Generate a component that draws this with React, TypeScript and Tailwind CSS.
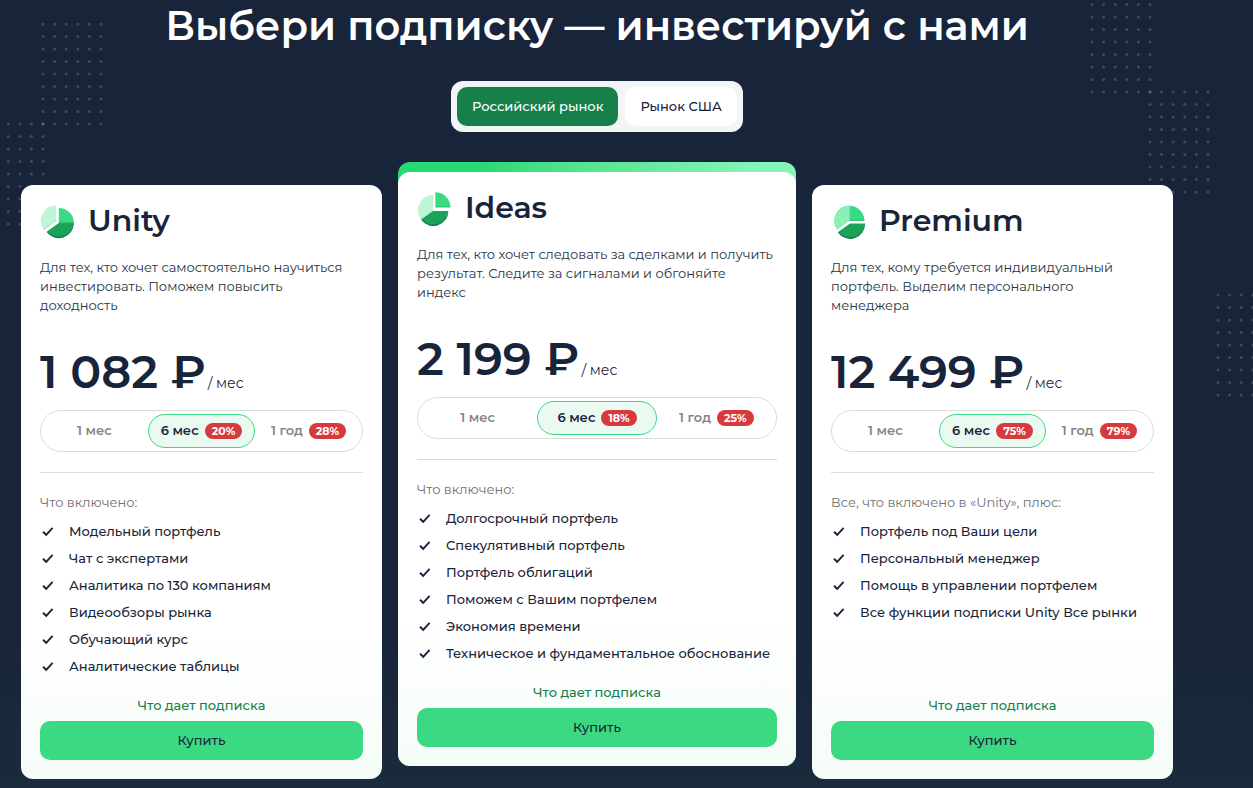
import { useState } from "react";
import clsx from "clsx";

type PieKind = "left" | "right" | "bottom";

interface Period {
  label: string;
  discount?: string;
}

interface Plan {
  name: string;
  pie: PieKind;
  description: string;
  price: string;
  periods: Period[];
  included: string;
  features: string[];
  featured?: boolean;
}

const plans: Plan[] = [
  {
    name: "Unity",
    pie: "left",
    description: "Для тех, кто хочет самостоятельно научиться\nинвестировать. Поможем повысить\nдоходность",
    price: "1 082 ₽",
    periods: [{ label: "1 мес" }, { label: "6 мес", discount: "20%" }, { label: "1 год", discount: "28%" }],
    included: "Что включено:",
    features: [
      "Модельный портфель",
      "Чат с экспертами",
      "Аналитика по 130 компаниям",
      "Видеообзоры рынка",
      "Обучающий курс",
      "Аналитические таблицы",
    ],
  },
  {
    name: "Ideas",
    pie: "right",
    description: "Для тех, кто хочет следовать за сделками и получить\nрезультат. Следите за сигналами и обгоняйте\nиндекс",
    price: "2 199 ₽",
    periods: [{ label: "1 мес" }, { label: "6 мес", discount: "18%" }, { label: "1 год", discount: "25%" }],
    included: "Что включено:",
    features: [
      "Долгосрочный портфель",
      "Спекулятивный портфель",
      "Портфель облигаций",
      "Поможем с Вашим портфелем",
      "Экономия времени",
      "Техническое и фундаментальное обоснование",
    ],
    featured: true,
  },
  {
    name: "Premium",
    pie: "bottom",
    description: "Для тех, кому требуется индивидуальный\nпортфель. Выделим персонального\nменеджера",
    price: "12 499 ₽",
    periods: [{ label: "1 мес" }, { label: "6 мес", discount: "75%" }, { label: "1 год", discount: "79%" }],
    included: "Все, что включено в «Unity», плюс:",
    features: [
      "Портфель под Ваши цели",
      "Персональный менеджер",
      "Помощь в управлении портфелем",
      "Все функции подписки Unity Все рынки",
    ],
  },
];

// centre of each slice: [left, right, bottom]; one of them is pulled out
const pies: Record<PieKind, { centers: [number, number][]; light: string }> = {
  left: { centers: [[16.2, 16.9], [18.8, 18.9], [18.8, 19.2]], light: "#bdf5d5" },
  right: { centers: [[16.3, 19.3], [18.4, 16.3], [16.3, 20]], light: "#bdf5d5" },
  bottom: { centers: [[18.4, 16.8], [18.4, 16.8], [19, 19.8]], light: "#8bf0b5" },
};

function PieIcon({ kind }: { kind: PieKind }) {
  const { centers, light } = pies[kind];
  const [left, right, bottom] = centers.map(([x, y]) => `translate(${x} ${y})`);

  return (
    <svg viewBox="0 -1 34 36" className="h-9 w-[34px] shrink-0" aria-hidden="true">
      <g transform={left}>
        <path d="M0 0V-15.3A15.3 15.3 0 0 0-12.4 9Z" fill={light} />
        <path d="M0-0.8V0L-12.4 9L-12.9 8.2Z" fill="#9debbf" />
      </g>
      <g transform={right}>
        <path d="M0 0V-15A15 15 0 0 1 15 0Z" fill="#3bd981" />
        <path d="M0-1H15V0H0Z" fill="#25c76d" />
      </g>
      <g transform={bottom}>
        <path d="M0 0H15A15 15 0 0 1-12.2 8.8Z" fill="#11804a" />
        <path d="M0 0H15A15 14 0 0 1-11.6 8.2Z" fill="#1ca35a" />
      </g>
    </svg>
  );
}

function CheckIcon() {
  return (
    <svg viewBox="0 0 12 10" className="h-[10px] w-3 shrink-0" fill="none" aria-hidden="true">
      <path d="M1 4.7L4.2 7.8L10.6 0.8" stroke="#18243a" strokeWidth="1.9" />
    </svg>
  );
}

function Dots({ className }: { className: string }) {
  return (
    <svg viewBox="0 0 62 104" className={clsx("absolute h-[104px] w-[62px]", className)} aria-hidden="true">
      {Array.from({ length: 54 }, (_, i) => (
        <circle key={i} cx={2 + (i % 6) * 11.6} cy={2 + Math.floor(i / 6) * 12.5} r="1.6" fill="#fff" fillOpacity="0.17" />
      ))}
    </svg>
  );
}

function PlanCard({ plan }: { plan: Plan }) {
  const [period, setPeriod] = useState(1);

  return (
    <article
      className={clsx(
        "flex flex-col rounded-xl",
        plan.featured ? "mb-[13px] bg-linear-to-r from-[#26d975] from-20% to-[#85f4b8] to-90% pt-[10px]" : "mt-[23px]"
      )}
    >
      <div className="flex flex-1 flex-col rounded-xl bg-linear-to-b from-white from-75% to-[#f5fcf8] px-[19px] pt-[18px] pb-[19px]">
        <div className="flex items-center gap-3.5">
          <PieIcon kind={plan.pie} />
          <h2 className="text-[30px] leading-9 font-semibold">{plan.name}</h2>
        </div>
        <p className="mt-[19px] text-[13px] leading-[19px] whitespace-pre-line text-[#2a3342]">{plan.description}</p>
        <p className="mt-[34px] flex items-baseline gap-0.5">
          <span className="text-[46px] leading-[46px] font-semibold">{plan.price}</span>
          <span className="text-sm">/ мес</span>
        </p>

        <div
          role="radiogroup"
          aria-label="Период"
          className="mt-[15px] grid h-[42px] grid-cols-3 items-center rounded-full border border-[#dcdcdc]"
        >
          {plan.periods.map((p, i) => (
            <label
              key={p.label}
              className={clsx(
                "relative flex h-[34px] cursor-pointer items-center justify-center gap-1.5 rounded-full border text-[13px] font-semibold",
                i === period ? "border-[#3bd981] bg-[#eafaf1]" : "border-transparent text-[#858585]"
              )}
            >
              <input
                type="radio"
                name={plan.name}
                checked={i === period}
                onChange={() => setPeriod(i)}
                className="absolute inset-0 cursor-pointer appearance-none rounded-full"
              />
              {p.label}
              {p.discount && (
                <span className="rounded-full bg-[#d63a3d] px-[7px] text-[11px] leading-4 font-bold text-white">
                  {p.discount}
                </span>
              )}
            </label>
          ))}
        </div>

        <hr className="mt-5 border-[#dcdcdc]" />
        <p className="mt-5 text-[13px] leading-[19px] text-[#707070]">{plan.included}</p>
        <ul className="mt-1.5 flex-1 text-[13px] leading-[27px] font-medium">
          {plan.features.map((f) => (
            <li key={f} className="flex items-center gap-[15px] pl-0.5">
              <CheckIcon />
              {f}
            </li>
          ))}
        </ul>
        <a href="#details" className="mt-4 self-center text-[13px] leading-[19px] font-medium text-[#17804a]">
          Что дает подписка
        </a>
        <button className="mt-1.5 h-[39px] cursor-pointer rounded-[10px] bg-[#3bd981] text-[13px] font-medium">
          Купить
        </button>
      </div>
    </article>
  );
}

export default function App() {
  const [market, setMarket] = useState(0);

  return (
    <main className="relative min-h-screen overflow-hidden bg-linear-to-b from-[#18243a] from-80% to-[#1a2b3c] pr-20 pl-[21px] font-['Montserrat','Inter',sans-serif] text-[#18243a]">
      <Dots className="top-[22px] left-[41px]" />
      <Dots className="top-[122px] -left-[17px]" />
      <Dots className="-top-[10px] right-[101px]" />
      <Dots className="top-[90px] right-[43px]" />
      <Dots className="top-[293px] -right-[25px]" />

      <div className="relative">
        <h1 className="text-center text-[40px] leading-[51px] font-semibold text-white">
          Выбери подписку — инвестируй с нами
        </h1>

        <div className="mx-auto mt-[30px] flex w-fit gap-[7px] rounded-xl bg-[#f3f4f6] p-1.5">
          {["Российский рынок", "Рынок США"].map((name, i) => (
            <button
              key={name}
              onClick={() => setMarket(i)}
              className={clsx(
                "h-[39px] cursor-pointer rounded-[10px] px-[15px] text-[13px] font-medium",
                i === market ? "bg-[#17804a] text-white" : "bg-white"
              )}
            >
              {name}
            </button>
          ))}
        </div>

        <div className="mt-[30px] grid grid-cols-[361fr_398fr_361fr] gap-4">
          {plans.map((plan) => (
            <PlanCard key={plan.name} plan={plan} />
          ))}
        </div>
      </div>
    </main>
  );
}
